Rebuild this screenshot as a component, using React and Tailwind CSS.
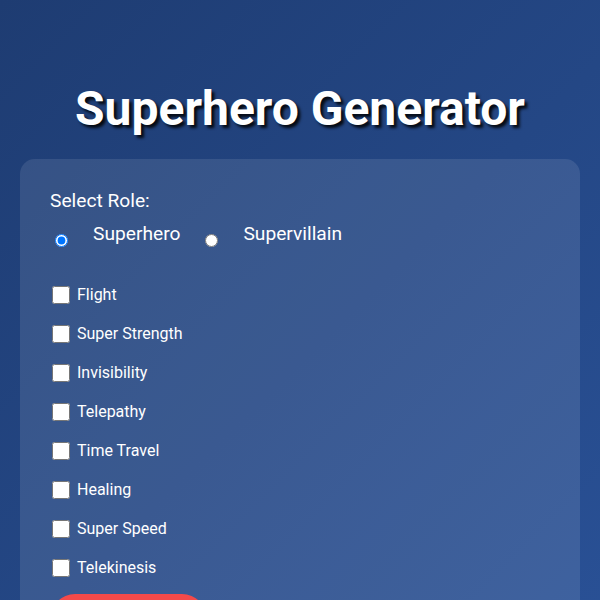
import React, { useState } from "react";

const POWERS = [
  "Flight",
  "Super Strength",
  "Invisibility",
  "Telepathy",
  "Time Travel",
  "Healing",
  "Super Speed",
  "Telekinesis",
];

export default function App() {
  const [role, setRole] = useState("hero");
  const [picked, setPicked] = useState({});

  return (
    <div
      className="min-h-screen bg-[linear-gradient(135deg,#1e3c72,#2a5298)] px-5 pt-[82px] pb-10 text-white"
      style={{ fontFamily: "Roboto, 'Noto Sans', sans-serif" }}
    >
      <h1 className="mb-[23px] text-center text-[48px] font-bold leading-[54px] [text-shadow:3px_3px_3px_rgba(0,0,0,0.85)]">
        Superhero Generator
      </h1>

      <div className="rounded-[15px] bg-white/10 p-[30px]">
        <div className="text-[19.2px] leading-[24px]">Select Role:</div>

        <div className="mt-[9px] flex items-start text-[19.2px] leading-[24px]">
          <label className="flex items-start">
            <input
              type="radio"
              name="role"
              checked={role === "hero"}
              onChange={() => setRole("hero")}
              className="m-0 ml-[5px] mt-[11.5px] h-[13px] w-[13px]"
            />
            <span className="ml-[25px]">Superhero</span>
          </label>
          <label className="ml-[25px] flex items-start">
            <input
              type="radio"
              name="role"
              checked={role === "villain"}
              onChange={() => setRole("villain")}
              className="m-0 mt-[11.5px] h-[13px] w-[13px]"
            />
            <span className="ml-[25px]">Supervillain</span>
          </label>
        </div>

        <div className="mt-[39px] flex flex-col gap-[21px]">
          {POWERS.map((p) => (
            <label key={p} className="flex h-[18px] items-center text-[16px]">
              <input
                type="checkbox"
                checked={!!picked[p]}
                onChange={() => setPicked({ ...picked, [p]: !picked[p] })}
                className="m-0 ml-[2px] h-[18px] w-[18px]"
              />
              <span className="ml-[7px]">{p}</span>
            </label>
          ))}
        </div>

        <button
          aria-label="Generate"
          className="mt-[17px] h-[50px] w-[157px] rounded-full bg-[#f44a4a]"
        />
      </div>
    </div>
  );
}
